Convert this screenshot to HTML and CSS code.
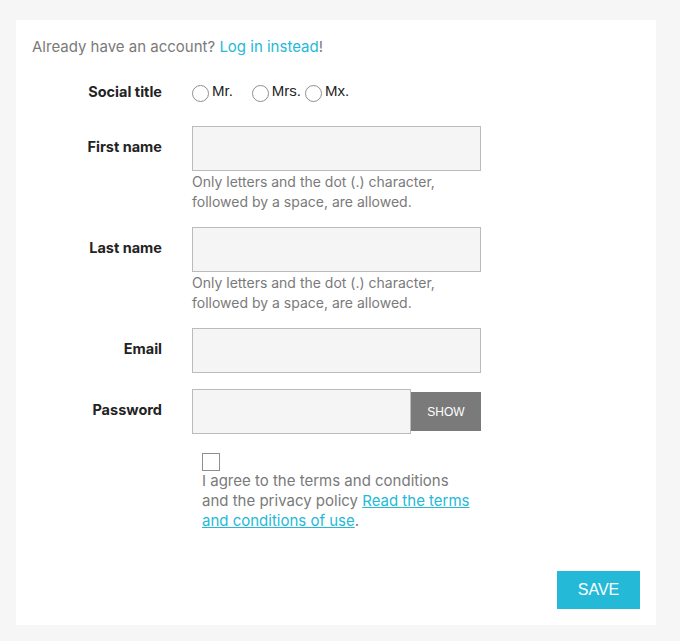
FILE: index.html
```html
<!DOCTYPE html>
<html lang="en">
<head>
<meta charset="utf-8">
<title>Create account</title>
<link rel="stylesheet" href="styles.css">
</head>
<body>
<div class="card">
  <p class="intro">Already have an account? <a href="#" class="link">Log in instead</a>!</p>
  <form class="form">
    <div class="row row-social">
      <label class="label">Social title</label>
      <div class="field radios">
        <label class="radio r1"><span class="circle"></span>Mr.</label>
        <label class="radio r2"><span class="circle"></span>Mrs.</label>
        <label class="radio"><span class="circle"></span>Mx.</label>
      </div>
    </div>
    <div class="row">
      <label class="label">First name</label>
      <div class="field">
        <div class="input"></div>
        <p class="help">Only letters and the dot (.) character, followed by a space, are allowed.</p>
      </div>
    </div>
    <div class="row">
      <label class="label">Last name</label>
      <div class="field">
        <div class="input"></div>
        <p class="help">Only letters and the dot (.) character, followed by a space, are allowed.</p>
      </div>
    </div>
    <div class="row row-email">
      <label class="label">Email</label>
      <div class="field">
        <div class="input"></div>
      </div>
    </div>
    <div class="row">
      <label class="label">Password</label>
      <div class="field pw">
        <div class="input pw-input"></div>
        <span class="show">SHOW</span>
      </div>
    </div>
    <div class="row">
      <span class="spacer"></span>
      <div class="field agree">
        <span class="checkbox"></span>
        <p class="agree-text">I agree to the terms and conditions and the privacy policy <a href="#" class="link ul">Read the terms and conditions of use</a>.</p>
      </div>
    </div>
    <div class="footer">
      <span class="save">SAVE</span>
    </div>
  </form>
</div>
</body>
</html>
```
FILE: styles.css
```css
html, body { margin: 0; padding: 0; }
body {
  background: #f6f6f6;
  padding: 20px 0 16px 16px;
  font-family: Inter, "Noto Sans", sans-serif;
  color: #7a7a7a;
}
.card {
  width: 608px;
  background: #fff;
  padding: 16px;
}
.intro {
  margin: 0;
  padding-top: 1px;
  font-size: 15px;
  line-height: 20px;
}
.link { color: #24b9d7; text-decoration: none; }
.link.ul { text-decoration: underline; }
.form { margin-top: 23px; }
.row {
  display: grid;
  grid-template-columns: 130px 289px;
  column-gap: 30px;
  margin-bottom: 15px;
}
.row-email { margin-bottom: 16px; }
.label {
  text-align: right;
  font-weight: 700;
  font-size: 14.5px;
  line-height: 20px;
  color: #232323;
  padding-top: 11px;
}
.row-social { margin-bottom: 22px; }
.row-social .label { padding-top: 2px; }
.radios {
  display: flex;
  align-items: flex-start;
  box-sizing: border-box;
  padding-top: 2px;
  height: 24px;
  font-family: "Liberation Sans", Arial, sans-serif;
  font-size: 15px;
  line-height: 17px;
  color: #232323;
}
.radio { display: flex; align-items: flex-start; }
.r1 { margin-right: 19px; }
.r2 { margin-right: 4px; }
.circle {
  box-sizing: border-box;
  width: 17px;
  height: 17px;
  border: 1px solid #8f8f8f;
  border-radius: 50%;
  margin-right: 3px;
  margin-top: 3px;
}
.input {
  height: 45px;
  box-sizing: border-box;
  background: #f5f5f5;
  border: 1px solid #bbb;
}
.help {
  margin: 0;
  font-size: 14px;
  line-height: 20px;
  padding-top: 1px;
}
.pw { display: flex; align-items: center; }
.pw-input { width: 219px; }
.show {
  width: 70px;
  height: 39px;
  background: #7a7a7a;
  color: #fff;
  font-family: "Liberation Sans", Arial, sans-serif;
  font-size: 12px;
  display: flex;
  align-items: center;
  justify-content: center;
}
.agree { padding-left: 10px; padding-top: 4px; }
.checkbox {
  display: block;
  width: 18px;
  height: 18px;
  box-sizing: border-box;
  border: 1px solid #8f8f8f;
}
.agree-text {
  margin: 0;
  max-width: 272px;
  font-size: 15px;
  line-height: 20px;
}
.footer {
  display: flex;
  justify-content: flex-end;
  margin-top: 40px;
}
.save {
  width: 83px;
  height: 38px;
  background: #24b9d7;
  color: #fff;
  font-family: "Liberation Sans", Arial, sans-serif;
  font-size: 16px;
  display: flex;
  align-items: center;
  justify-content: center;
}
```
